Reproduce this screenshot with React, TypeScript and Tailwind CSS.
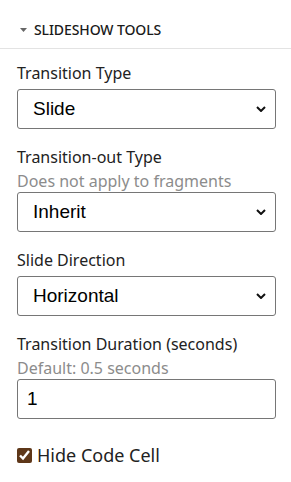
import React from "react";

const labelFont = { fontFamily: '"Noto Sans", "Open Sans", sans-serif' };

const Chevron = () => (
  <svg
    className="pointer-events-none absolute right-[10px] top-1/2 -translate-y-1/2"
    width="10"
    height="6"
    viewBox="0 0 10 6"
  >
    <path d="M1 1l4 4 4-4" fill="none" stroke="#111" strokeWidth="2" />
  </svg>
);

const Select = ({ value, options }: { value: string; options: string[] }) => (
  <div className="relative">
    <select
      defaultValue={value}
      className="h-[40px] w-full appearance-none rounded-[3px] border border-[#767676] bg-white pl-[15px] text-[19px] text-black outline-none"
      style={{ fontFamily: '"Liberation Sans", Arial, sans-serif' }}
    >
      {options.map((o) => (
        <option key={o}>{o}</option>
      ))}
    </select>
    <Chevron />
  </div>
);

const Field = ({
  label,
  hint,
  children,
}: {
  label: string;
  hint?: string;
  children: React.ReactNode;
}) => (
  <div className="flex flex-col">
    <div className="text-[16px] leading-6 text-[#222]">{label}</div>
    {hint ? (
      <div className="mb-px mt-0.5 text-[16px] leading-5 text-[#8c8c8c]">{hint}</div>
    ) : (
      <div className="h-1" />
    )}
    {children}
  </div>
);

export default function App() {
  return (
    <div className="h-[482px] w-[291px] bg-white" style={labelFont}>
      <div className="flex h-[49px] items-end border-b border-[#e3e3e3] pb-[6px] pl-[20px]">
        <div className="flex items-center gap-[7px]">
          <svg width="7" height="4" viewBox="0 0 7 4">
            <path d="M0 0h7L3.5 4z" fill="#666" />
          </svg>
          <span className="text-[14px] font-medium leading-6 tracking-[-0.1px] text-[#1a1a1a]">
            SLIDESHOW TOOLS
          </span>
        </div>
      </div>
      <div className="flex flex-col gap-4 pl-[17px] pr-[15px] pt-3">
        <Field label="Transition Type">
          <Select value="Slide" options={["None", "Fade", "Slide", "Convex", "Concave", "Zoom"]} />
        </Field>
        <Field label="Transition-out Type" hint="Does not apply to fragments">
          <Select value="Inherit" options={["Inherit", "None", "Fade", "Slide"]} />
        </Field>
        <Field label="Slide Direction">
          <Select value="Horizontal" options={["Horizontal", "Vertical"]} />
        </Field>
        <Field label="Transition Duration (seconds)" hint="Default: 0.5 seconds">
          <input
            defaultValue="1"
            className="h-[40px] w-full rounded-[3px] border border-[#767676] bg-white pl-[9px] text-[19px] text-black outline-none"
            style={{ fontFamily: '"Liberation Sans", Arial, sans-serif' }}
          />
        </Field>
        <label className="mt-[8px] flex items-center gap-[5px] text-[18px] leading-6 text-[#222]">
          <input type="checkbox" defaultChecked className="m-0 h-[15px] w-[15px] accent-[#5e3719]" />
          Hide Code Cell
        </label>
      </div>
    </div>
  );
}
